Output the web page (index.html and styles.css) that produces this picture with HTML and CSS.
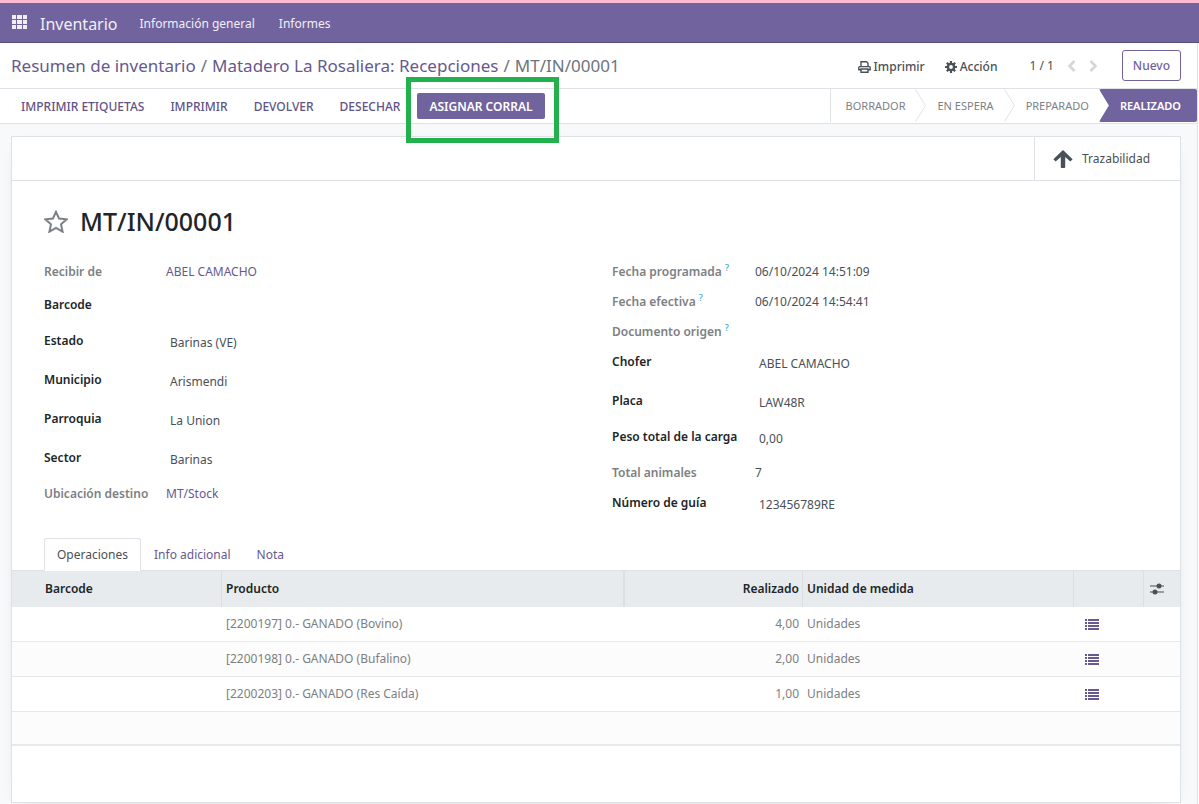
FILE: index.html
```html
<!DOCTYPE html>
<html lang="es">
<head>
<meta charset="UTF-8" />
<meta name="viewport" content="width=device-width, initial-scale=1" />
<title>MT/IN/00001 - Inventario</title>
<link rel="stylesheet" href="styles.css">
</head>
<body>

  <!-- Icons shared by the list rows -->
  <svg class="sprite" aria-hidden="true">
    <symbol id="icon-list" viewBox="0 0 14 11">
      <path d="M0 0h2v2H0zM3 0h11v2H3zM0 3h2v2H0zM3 3h11v2H3zM0 6h2v2H0zM3 6h11v2H3zM0 9h2v2H0zM3 9h11v2H3z" />
    </symbol>
    <symbol id="icon-chevron" viewBox="0 0 11 33">
      <path d="M0.5 0.5l10 16l-10 16" fill="none" stroke="#dee2e6" />
    </symbol>
  </svg>

  <!-- Main navbar -->
  <nav class="navbar">
    <button class="apps" type="button" aria-label="Aplicaciones">
      <svg width="15" height="14" viewBox="0 0 15 14" fill="currentColor"><path d="M0 0h4v4H0zM5 0h5v4H5zM11 0h4v4h-4zM0 5h4v4H0zM5 5h5v4H5zM11 5h4v4h-4zM0 10h4v4H0zM5 10h5v4H5zM11 10h4v4h-4z" /></svg>
    </button>
    <a class="brand" href="#">Inventario</a>
    <a class="nav-link" href="#">Información general</a>
    <a class="nav-link" href="#">Informes</a>
  </nav>

  <div class="action">
    <!-- Breadcrumb and pager -->
    <header class="control-panel">
      <div class="breadcrumb">
        <a href="#">Resumen de inventario</a>
        <span>/</span>
        <a href="#">Matadero La Rosaliera: Recepciones</a>
        <span>/</span>
        <span>MT/IN/00001</span>
      </div>
      <div class="cp-menus">
        <button class="cp-btn" type="button">
          <svg width="13" height="12" viewBox="0 0 13 12" fill="none" stroke="currentColor" stroke-width="1.4"><path d="M3 5.5V.8h5.6L10 2.2v3.3M3 8.7H.8V6.4c0-.5.3-.8.8-.8h9.8c.5 0 .8.3.8.8v2.3H10M3 8h7v3.3H3z" /></svg>
          Imprimir
        </button>
        <button class="cp-btn" type="button">
          <svg width="12" height="12" viewBox="0 0 12 12"><circle cx="6" cy="6" r="3.1" fill="none" stroke="currentColor" stroke-width="2.4" /><path d="M6 0v3M6 9v3M0 6h3M9 6h3M1.8 1.8l2 2M8.2 8.2l2 2M10.2 1.8l-2 2M3.8 8.2l-2 2" stroke="currentColor" stroke-width="2.2" /></svg>
          Acción
        </button>
      </div>
      <div class="pager">
        <span>1 / 1</span>
        <button type="button" aria-label="Anterior" disabled><svg width="9" height="12" viewBox="0 0 9 12"><path d="M7.5 1L2.5 6l5 5" /></svg></button>
        <button type="button" aria-label="Siguiente" disabled><svg width="9" height="12" viewBox="0 0 9 12"><path d="M1.5 1l5 5l-5 5" /></svg></button>
      </div>
      <button class="btn-new" type="button">Nuevo</button>
    </header>

    <!-- Buttons and status -->
    <div class="statusbar">
      <div class="status-buttons">
        <button type="button">Imprimir etiquetas</button>
        <button type="button">Imprimir</button>
        <button type="button">Devolver</button>
        <button type="button">Desechar</button>
      </div>
      <div class="highlight">
        <button class="btn-primary" type="button">Asignar corral</button>
      </div>
      <div class="stages">
        <span class="stage first">Borrador</span>
        <svg class="chevron"><use href="#icon-chevron" /></svg>
        <span class="stage">En espera</span>
        <svg class="chevron"><use href="#icon-chevron" /></svg>
        <span class="stage">Preparado</span>
        <span class="stage current">Realizado</span>
      </div>
    </div>

    <main class="form-view">
      <section class="sheet">
        <div class="button-box">
          <button class="stat-btn" type="button">
            <svg width="20" height="18" viewBox="0 0 20 18" fill="currentColor"><path d="M10 0L19.6 9.2L17.4 11.4L12.2 7V17.2q0 .8-.8.8H8.6q-.8 0-.8-.8V7L2.6 11.4L.4 9.2z" /></svg>
            Trazabilidad
          </button>
        </div>

        <div class="title">
          <button class="star" type="button" aria-label="Favorito">
            <svg width="24" height="23" viewBox="0 0 24 23"><path d="M12 1.8l3 6.7l7.6.8l-5.6 5l1.6 7.4l-6.6-3.8l-6.6 3.8L7 14.3l-5.6-5l7.6-.8z" /></svg>
          </button>
          <h1>MT/IN/00001</h1>
        </div>

        <div class="groups">
          <dl class="group">
            <div class="field h33"><dt class="muted">Recibir de</dt><dd><a href="#">ABEL CAMACHO</a></dd></div>
            <div class="field h36"><dt>Barcode</dt><dd></dd></div>
            <div class="field h39"><dt>Estado</dt><dd class="inset">Barinas (VE)</dd></div>
            <div class="field h39"><dt>Municipio</dt><dd class="inset">Arismendi</dd></div>
            <div class="field h39"><dt>Parroquia</dt><dd class="inset">La Union</dd></div>
            <div class="field h36"><dt>Sector</dt><dd class="inset">Barinas</dd></div>
            <div class="field"><dt class="muted">Ubicación destino</dt><dd><a href="#">MT/Stock</a></dd></div>
          </dl>
          <dl class="group wide">
            <div class="field"><dt class="muted">Fecha programada <sup>?</sup></dt><dd>06/10/2024 14:51:09</dd></div>
            <div class="field"><dt class="muted">Fecha efectiva <sup>?</sup></dt><dd>06/10/2024 14:54:41</dd></div>
            <div class="field"><dt class="muted">Documento origen <sup>?</sup></dt><dd></dd></div>
            <div class="field h39"><dt>Chofer</dt><dd class="inset">ABEL CAMACHO</dd></div>
            <div class="field h36"><dt>Placa</dt><dd class="inset">LAW48R</dd></div>
            <div class="field h36"><dt>Peso total de la carga</dt><dd class="inset">0,00</dd></div>
            <div class="field"><dt class="muted">Total animales</dt><dd>7</dd></div>
            <div class="field"><dt>Número de guía</dt><dd class="inset">123456789RE</dd></div>
          </dl>
        </div>

        <div class="tabs">
          <a class="tab active" href="#">Operaciones</a>
          <a class="tab" href="#">Info adicional</a>
          <a class="tab" href="#">Nota</a>
        </div>

        <table class="list">
          <colgroup>
            <col class="col-barcode"><col><col class="col-done"><col class="col-uom"><col class="col-detail"><col class="col-opt">
          </colgroup>
          <thead>
            <tr>
              <th>Barcode</th>
              <th class="split">Producto</th>
              <th class="num">Realizado</th>
              <th>Unidad de medida</th>
              <th></th>
              <th>
                <button class="icon-btn dark" type="button" aria-label="Columnas opcionales">
                  <svg width="14" height="12" viewBox="0 0 14 12" fill="currentColor"><path d="M0 2.5h14v1H0zM0 8.5h14v1H0z" /><circle cx="9" cy="3" r="2.5" /><circle cx="5" cy="9" r="2.5" /></svg>
                </button>
              </th>
            </tr>
          </thead>
          <tbody>
            <tr>
              <td></td><td>[2200197] 0.- GANADO (Bovino)</td><td class="num">4,00</td><td>Unidades</td>
              <td><button class="icon-btn" type="button" aria-label="Operaciones detalladas"><svg width="14" height="11"><use href="#icon-list" /></svg></button></td><td></td>
            </tr>
            <tr>
              <td></td><td>[2200198] 0.- GANADO (Bufalino)</td><td class="num">2,00</td><td>Unidades</td>
              <td><button class="icon-btn" type="button" aria-label="Operaciones detalladas"><svg width="14" height="11"><use href="#icon-list" /></svg></button></td><td></td>
            </tr>
            <tr>
              <td></td><td>[2200203] 0.- GANADO (Res Caída)</td><td class="num">1,00</td><td>Unidades</td>
              <td><button class="icon-btn" type="button" aria-label="Operaciones detalladas"><svg width="14" height="11"><use href="#icon-list" /></svg></button></td><td></td>
            </tr>
            <tr class="empty"><td colspan="6"></td></tr>
          </tbody>
        </table>
      </section>
    </main>
  </div>

</body>
</html>
```
FILE: styles.css
```css
* {
  margin: 0; padding: 0; box-sizing: border-box;
}
body {
  background: #fff;
  font-family: "Noto Sans", "Open Sans", sans-serif;
  font-size: 12px;
  line-height: 20px;
  color: #495057;
  border-top: 3px solid #ffbcd1;
}
a {
  color: #66598f;
  text-decoration: none;
}
button {
  font: inherit;
  color: inherit;
  background: none;
  border: 0;
  cursor: pointer;
}
svg {
  display: block;
  flex: none;
}
.sprite {
  position: absolute;
  width: 0;
  height: 0;
}

/* Navbar */
.navbar {
  display: flex;
  align-items: center;
  height: 40px;
  padding: 2px 12px 0;
  background: #71639e;
  border-bottom: 1px solid #5a4f7f;
}
.navbar a {
  color: #f1eff5;
}
.apps {
  color: #f1eff5;
  margin-right: 13px;
  padding-bottom: 4px;
}
.navbar .brand {
  font-size: 16px;
  margin-right: 22px;
}
.nav-link {
  margin-right: 24px;
}

.action {
  margin-right: 1px;
  border-right: 1px solid #dee2e6;
}

/* Control panel */
.control-panel {
  display: flex;
  align-items: center;
  height: 46px;
  padding: 0 16px 0 11px;
  border-bottom: 1px solid #dee2e6;
}
.breadcrumb {
  display: flex;
  gap: 5px;
  flex: 1;
  font-size: 17px;
  line-height: 24px;
  color: #6c757d;
  white-space: nowrap;
}
.cp-menus {
  display: flex;
  gap: 20px;
  margin-right: 32px;
  padding-top: 2px;
}
.cp-btn {
  display: flex;
  align-items: center;
  gap: 3px;
  font-weight: 500;
}
.pager {
  display: flex;
  align-items: center;
  gap: 13px;
  margin-right: 24px;
}
.pager svg {
  fill: none;
  stroke: #d3d6da;
  stroke-width: 2.6;
}
.btn-new {
  height: 31px;
  padding: 1px 10px 0;
  color: #71639e;
  font-weight: 500;
  border: 1px solid #71639e;
  border-radius: 3px;
}

/* Status bar */
.statusbar {
  display: flex;
  align-items: center;
  height: 35px;
  border-bottom: 1px solid #dee2e6;
  text-transform: uppercase;
}
.status-buttons {
  display: flex;
  gap: 26px;
  padding: 2px 0 0 21px;
  margin-right: 17px;
  color: #5f5386;
  font-weight: 500;
}
.status-buttons button,
.btn-primary {
  text-transform: uppercase;
  white-space: nowrap;
}
.highlight {
  position: relative;
}
.highlight::after {
  content: "";
  position: absolute;
  inset: -16px -14px -24px -11px;
  border: 5px solid #22b14c;
  pointer-events: none;
}
.btn-primary {
  display: block;
  height: 26px;
  padding: 1px 12px 0;
  background: #71639e;
  color: #fff;
  font-weight: 600;
  border-radius: 2px;
}
.stages {
  display: flex;
  align-self: flex-start;
  margin-left: auto;
  font-size: 11px;
  line-height: 33px;
  color: #7c8186;
}
.stage {
  padding: 0 10px 0 11px;
}
.stage.first {
  padding-left: 15px;
  border-left: 1px solid #dee2e6;
}
.chevron {
  width: 11px;
  height: 33px;
}
.stage.current {
  padding: 0 16px 0 21px;
  background: #71639e;
  color: #fff;
  font-weight: 600;
  border-radius: 2px;
  clip-path: polygon(0 0, 100% 0, 100% 100%, 0 100%, 10px 50%);
}

/* Form sheet */
.form-view {
  padding: 12px 16px 1px 11px;
  background: #f8f9fa;
}
.sheet {
  min-height: 667px;
  background: #fff;
  border: 1px solid #dee2e6;
  box-shadow: 0 5px 20px -15px rgba(0, 0, 0, 0.4);
}
.button-box {
  display: flex;
  justify-content: flex-end;
  height: 44px;
  border-bottom: 1px solid #dee2e6;
}
.stat-btn {
  display: flex;
  align-items: center;
  gap: 9px;
  width: 146px;
  padding-left: 18px;
  border-left: 1px solid #dee2e6;
}
.title {
  display: flex;
  align-items: center;
  gap: 12px;
  padding: 22px 32px 0;
}
.title h1 {
  font-size: 25px;
  line-height: 36px;
  font-weight: 500;
  color: #212529;
}
.star svg {
  fill: none;
  stroke: #7c8186;
  stroke-width: 2;
}

/* Field groups */
.groups {
  display: grid;
  grid-template-columns: 1fr 1fr;
  gap: 32px;
  padding: 23px 32px 0;
}
.field {
  display: grid;
  grid-template-columns: 122px 1fr;
  height: 30px;
}
.wide .field {
  grid-template-columns: 143px 1fr;
}
.field.h33 { height: 33px; }
.field.h36 { height: 36px; }
.field.h39 { height: 39px; }
.field dt {
  font-weight: 600;
  color: #212529;
  white-space: nowrap;
}
.field dt.muted {
  color: #7c7f83;
}
.field dd.inset {
  padding: 2px 0 0 4px;
}
sup {
  font-size: 9px;
  font-weight: 500;
  line-height: 1;
  color: #3fa7c0;
}

/* Notebook tabs */
.tabs {
  display: flex;
  height: 33px;
  margin-top: 15px;
  padding: 0 32px;
  border-bottom: 1px solid #dee2e6;
}
.tab {
  height: 32px;
  padding: 7px 12px;
  line-height: 18px;
  border: 1px solid transparent;
}
.tab.active {
  height: 33px;
  color: #495057;
  background: #fff;
  border-color: #dee2e6;
  border-bottom-color: #fff;
  border-radius: 3px 3px 0 0;
}

/* Operations list */
.list {
  width: 100%;
  table-layout: fixed;
  border-collapse: separate;
  border-spacing: 0;
}
.col-barcode { width: 210px; }
.col-done { width: 178px; }
.col-uom { width: 271px; }
.col-detail { width: 70px; }
.col-opt { width: 36px; }
.list th {
  height: 36px;
  padding: 0 3px 0 4px;
  background: #e7ebee;
  border-right: 1px solid #dbdfe4;
  color: #212529;
  font-weight: 600;
  text-align: left;
}
.list th:first-child {
  padding-left: 33px;
}
.list th.split {
  border-right-width: 2px;
}
.list th:last-child {
  border-right: 0;
}
.list td {
  height: 35px;
  padding: 0 4px;
  color: #7c7f83;
  border-bottom: 1px solid #e7eaed;
}
.list .num {
  text-align: right;
}
.list tr:nth-child(even) td {
  background: #fcfcfc;
}
.list .empty td {
  height: 34px;
  border-bottom-width: 2px;
}
.icon-btn {
  display: flex;
  align-items: center;
  height: 20px;
  margin-left: 7px;
  color: #66598f;
  fill: #66598f;
}
.icon-btn.dark {
  margin-left: 2px;
  color: #495057;
}
```
